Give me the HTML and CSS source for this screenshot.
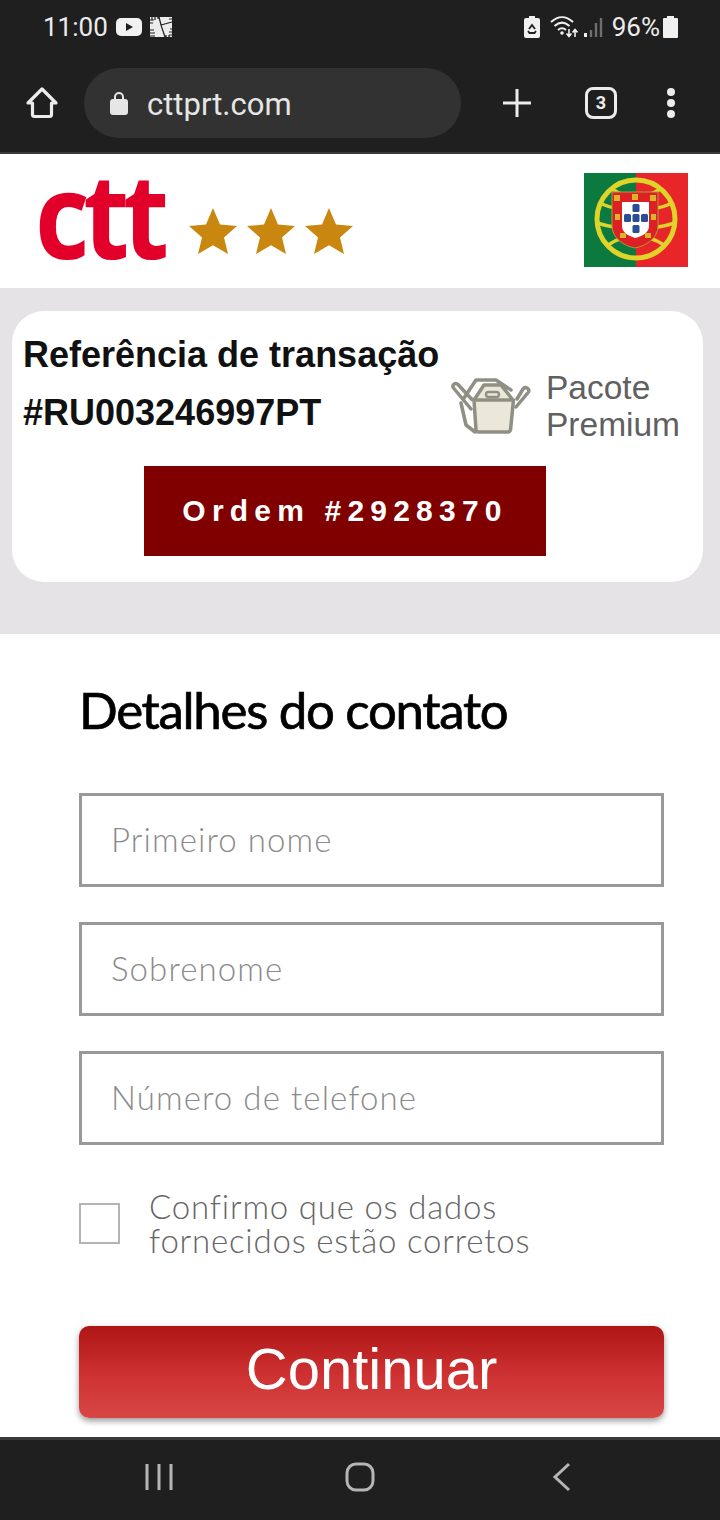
FILE: index.html
```html
<!DOCTYPE html>
<html lang="pt">
<head>
  <meta charset="UTF-8" />
  <meta name="viewport" content="width=device-width, initial-scale=1.0" />
  <title>Detalhes do contato</title>
  <link rel="stylesheet" href="styles.css">
</head>
<body>
  <header class="chrome">
    <div class="status-bar">
      <div class="status-left">
        <span class="clock">11:00</span>
        <svg class="yt" width="26" height="18" viewBox="0 0 26 18"><rect width="26" height="18" rx="5" fill="#f1f1f1"/><path d="M10 5l7 4-7 4z" fill="#1f1f1f"/></svg>
        <svg class="pic" width="24" height="22" viewBox="0 0 24 22"><rect x="1" y="1" width="22" height="20" fill="#ececec"/><path d="M10 1l2 8 4 12M12 9l11-3M0 4h5M0 7h4M0 14h5M0 17h6M0 20h6M3 0v4M6 0v4M9 0v3M23 3h-3M24 13h-3M24 16h-4M24 19h-4M17 22v-3M20 22v-3" stroke="#1f1f1f" stroke-width="1.200" fill="none"/></svg>
      </div>
      <div class="status-right">
        <svg width="16" height="22" viewBox="0 0 16 22"><path d="M5 0h6v2h3a2 2 0 0 1 2 2v16a2 2 0 0 1-2 2H2a2 2 0 0 1-2-2V4a2 2 0 0 1 2-2h3z" fill="#f1f1f1"/><path d="M5 13l3-4 3 4M4 15l1.500 2h5l1.500-2" stroke="#1f1f1f" stroke-width="1.800" fill="none"/></svg>
        <svg class="wifi" width="28" height="22" viewBox="0 0 28 22"><path d="M1 6c7-6.500 15-6.500 22 0M4.500 10c5-4.500 10-4.500 15 0M8 14c3-2.500 5-2.500 8 0" stroke="#f1f1f1" stroke-width="2" fill="none"/><circle cx="12" cy="17" r="1.800" fill="#f1f1f1"/><path d="M19 13v7M16.500 17.500l2.500 3 2.500-3M25 21v-7M22.500 16.500l2.500-3 2.500 3" stroke="#f1f1f1" stroke-width="1.600" fill="none"/></svg>
        <svg class="signal" width="19" height="20" viewBox="0 0 19 20"><path d="M1.500 20v-4" stroke="#eee" stroke-width="3"/><path d="M7 20v-7M12 20V6M17 20V1" stroke="#6f6f6f" stroke-width="2.400"/></svg>
        <span class="battery-pct">96%</span>
        <svg width="15" height="22" viewBox="0 0 15 22"><path d="M4 0h7v2h3a1 1 0 0 1 1 1v18a1 1 0 0 1-1 1H1a1 1 0 0 1-1-1V3a1 1 0 0 1 1-1h3z" fill="#f1f1f1"/></svg>
      </div>
    </div>
    <div class="toolbar">
      <svg class="home" width="34" height="34" viewBox="0 0 34 34"><path d="M3 17L17 3l14 14h-4.500v11.500a2 2 0 0 1-2 2h-15a2 2 0 0 1-2-2V17z" fill="none" stroke="#ececec" stroke-width="3.200" stroke-linejoin="round"/></svg>
      <div class="address">
        <svg width="18" height="24" viewBox="0 0 18 24"><path d="M5 9V6a4 4 0 0 1 8 0v3" fill="none" stroke="#e6e6e6" stroke-width="2"/><rect y="8" width="18" height="16" rx="3" fill="#e6e6e6"/></svg>
        <span class="url">cttprt.com</span>
      </div>
      <svg class="plus" width="30" height="30" viewBox="0 0 30 30"><path d="M15 1v28M1 15h28" stroke="#ececec" stroke-width="3"/></svg>
      <div class="tabs">3</div>
      <div class="dots"><i></i><i></i><i></i></div>
    </div>
  </header>

  <main class="page">
    <section class="brand">
      <div class="brand-left">
        <span class="logo">ctt</span>
        <div class="stars">
          <svg width="48" height="46" viewBox="0 0 48 46"><path d="M24 0l7 16.500 17 1.500-13 11.500 4 16.500-15-8.800-15 8.800 4-16.500L0 18l17-1.500z" fill="#c9870f"/></svg>
          <svg width="48" height="46" viewBox="0 0 48 46"><path d="M24 0l7 16.500 17 1.500-13 11.500 4 16.500-15-8.800-15 8.800 4-16.500L0 18l17-1.500z" fill="#c9870f"/></svg>
          <svg width="48" height="46" viewBox="0 0 48 46"><path d="M24 0l7 16.500 17 1.500-13 11.500 4 16.500-15-8.800-15 8.800 4-16.500L0 18l17-1.500z" fill="#c9870f"/></svg>
        </div>
      </div>
      <svg class="flag" width="104" height="94" viewBox="0 0 104 94">
        <rect width="52" height="94" fill="#0c7a3e"/>
        <rect x="52" width="52" height="94" fill="#e8262a"/>
        <circle cx="52" cy="46" r="39" fill="none" stroke="#dfd42a" stroke-width="5"/>
        <path d="M15 30c24 10 50 10 74 0M13 50c26 8 52 8 78 0M24 72c18-12 38-12 56 0M28 16c14 10 34 10 48 0" fill="none" stroke="#dfd42a" stroke-width="3.500"/>
        <path d="M28 19h46v34c0 12-12 20-23 22-11-2-23-10-23-22z" fill="#dd2024" stroke="#a99a3a" stroke-width="1"/>
        <path d="M38 29h27v24c0 7-7 10-13.500 12C45 63 38 60 38 53z" fill="#fff"/>
        <g fill="#2b4d95">
          <rect x="48.500" y="31" width="7" height="8" rx="1.500"/>
          <rect x="48.500" y="41" width="7" height="8" rx="1.500"/>
          <rect x="48.500" y="52" width="7" height="8" rx="1.500"/>
          <rect x="40" y="41" width="7" height="8" rx="1.500"/>
          <rect x="57" y="41" width="7" height="8" rx="1.500"/>
        </g>
        <g fill="#dcb32a">
          <rect x="30" y="22" width="6" height="6"/>
          <rect x="48" y="21" width="6" height="6"/>
          <rect x="66" y="22" width="6" height="6"/>
          <rect x="31" y="41" width="5" height="6"/>
          <rect x="67" y="41" width="5" height="6"/>
          <rect x="36" y="60" width="6" height="5"/>
          <rect x="61" y="60" width="6" height="5"/>
        </g>
      </svg>
    </section>

    <section class="band">
      <div class="card">
        <div class="card-top">
          <div class="reference">
            <div>Referência de transação</div>
            <div>#RU003246997PT</div>
          </div>
          <div class="package">
            <svg width="80" height="60" viewBox="0 0 80 60">
              <path d="M23 24h40l-4 30c-.3 1.500-1 2-2.500 2h-30c-1.500 0-2.500-.5-3-2z" fill="#ebe8d9"/>
              <path d="M33 9h17l12 15H23z" fill="#ebe8d9"/>
              <path d="M13 22l12-18h20l15 10M23 24l10-15h17l12 15zM23 24l2 30c.3 1.500 1 2 2.500 2h29c1.500 0 2.500-.5 3-2l3-30" fill="none" stroke="#8f8f83" stroke-width="3.500" stroke-linejoin="round" stroke-linecap="round"/>
              <path d="M20 33L2.500 12c-2-3 2-6 4.500-3.500l14 15M66 23l6-10c2-3 7-.5 5.500 3L65 31M10 27l5 22 9 7" fill="none" stroke="#8f8f83" stroke-width="3.500" stroke-linejoin="round" stroke-linecap="round"/>
              <rect x="35" y="16" width="13" height="5" rx="2.500" fill="none" stroke="#8f8f83" stroke-width="2.400"/>
            </svg>
            <div class="package-label">Pacote<br>Premium</div>
          </div>
        </div>
        <div class="order">Ordem #2928370</div>
      </div>
    </section>

    <form class="contact">
      <h2>Detalhes do contato</h2>
      <div class="field">Primeiro nome</div>
      <div class="field">Sobrenome</div>
      <div class="field">Número de telefone</div>
      <label class="confirm">
        <span class="box"></span>
        <span>Confirmo que os dados<br>fornecidos estão corretos</span>
      </label>
      <div class="continue">Continuar</div>
    </form>
  </main>

  <nav class="nav-bar">
    <svg width="30" height="30" viewBox="0 0 30 30"><path d="M3 2v26M15 2v26M27 2v26" stroke="#b5b5b5" stroke-width="3"/></svg>
    <svg width="30" height="30" viewBox="0 0 30 30"><rect x="2" y="2" width="26" height="26" rx="9" fill="none" stroke="#b5b5b5" stroke-width="3"/></svg>
    <svg width="26" height="30" viewBox="0 0 26 30"><path d="M23 2L9 15l14 13" fill="none" stroke="#b5b5b5" stroke-width="3"/></svg>
  </nav>
</body>
</html>
```

FILE: styles.css
```css
:root {
  --chrome: #1f1f1f;
  --chrome-light: #323232;
  --chrome-text: #ececec;
  --band: #e5e3e5;
  --field-border: #999;
  --placeholder: #8b8b8b;
}

* {
  box-sizing: border-box;
}

html,
body {
  margin: 0;
  height: 1520px;
  overflow: hidden;
}

body {
  display: flex;
  flex-direction: column;
  background-color: #fff;
  font-family: 'Liberation Sans', sans-serif;
}

/* phone + browser chrome */

.chrome {
  height: 154px;
  background-color: var(--chrome);
  border-bottom: 2px solid #3a3a3a;
  color: var(--chrome-text);
  font-family: Roboto, sans-serif;
}

.status-bar {
  height: 54px;
  padding: 0 42px 0 43px;
  display: flex;
  justify-content: space-between;
  align-items: center;
}

.status-left,
.status-right {
  display: flex;
  align-items: center;
}

.clock {
  font-size: 26px;
  margin-right: 8px;
}

.pic {
  margin-left: 7px;
}

.status-right .wifi {
  margin-left: 10px;
}

.status-right .signal {
  margin-left: 6px;
}

.battery-pct {
  font-size: 26px;
  margin: 0 3px 0 9px;
}

.toolbar {
  height: 98px;
  padding: 0 40px 0 25px;
  display: flex;
  align-items: center;
}

.address {
  width: 377px;
  height: 70px;
  margin-left: 25px;
  padding-left: 26px;
  border-radius: 35px;
  background-color: var(--chrome-light);
  display: flex;
  align-items: center;
  gap: 19px;
}

.url {
  margin-top: 2px;
  font-size: 31px;
  color: #e6e6e6;
}

.plus {
  margin-left: 41px;
}

.tabs {
  width: 32px;
  height: 32px;
  margin-left: 53px;
  border: 3px solid var(--chrome-text);
  border-radius: 8px;
  font-size: 18px;
  font-weight: 700;
  line-height: 26px;
  text-align: center;
}

.dots {
  margin-left: 50px;
  display: flex;
  flex-direction: column;
  gap: 3px;
}

.dots i {
  width: 8px;
  height: 8px;
  border-radius: 50%;
  background-color: var(--chrome-text);
}

/* page */

.page {
  flex: 1;
  min-height: 0;
}

.brand {
  height: 134px;
  padding: 0 32px 0 35px;
  display: flex;
  justify-content: space-between;
  align-items: center;
}

.brand-left {
  display: flex;
  align-items: flex-end;
}

.logo {
  width: 130px;
  height: 107px;
  font-family: 'Open Sans', sans-serif;
  font-size: 118px;
  font-weight: 700;
  letter-spacing: -7px;
  line-height: 91px;
  color: #e2002a;
  transform: scaleX(.9);
  transform-origin: left;
}

.stars {
  margin: 0 0 21px 24px;
  display: flex;
  gap: 10px;
}

.flag {
  margin-top: -2px;
}

.band {
  height: 346px;
  padding: 23px 17px 0 12px;
  background-color: var(--band);
}

.card {
  height: 271px;
  background-color: #fff;
  border-radius: 32px;
}

.card-top {
  height: 155px;
  padding: 15px 0 0 11px;
  display: flex;
}

.reference {
  width: 428px;
  font-size: 36px;
  font-weight: 700;
  line-height: 58px;
  color: #111;
}

.package {
  display: flex;
  align-items: center;
  height: 106px;
  margin-top: 27px;
  gap: 15px;
}

.package-label {
  font-size: 33.500px;
  line-height: 37px;
  color: #606060;
}

.order {
  width: 402px;
  height: 90px;
  margin-left: 132px;
  background-color: #800000;
  color: #fff;
  font-size: 30px;
  font-weight: 700;
  letter-spacing: 6.200px;
  line-height: 90px;
  text-align: center;
}

.contact {
  padding: 0 56px 0 79px;
}

h2 {
  margin: 46px 0 0;
  height: 113px;
  font-family: Lato, sans-serif;
  font-size: 51px;
  font-weight: 400;
  -webkit-text-stroke: .7px #000;
  line-height: 60px;
  letter-spacing: -1.300px;
  color: #000;
}

.field {
  height: 94px;
  margin-bottom: 35px;
  padding-left: 29px;
  border: 3px solid var(--field-border);
  font-family: Lato, sans-serif;
  font-size: 33px;
  font-weight: 300;
  letter-spacing: 1.100px;
  line-height: 87px;
  color: var(--placeholder);
}

.confirm {
  display: flex;
  align-items: center;
  gap: 29px;
  margin-top: 44px;
  font-family: Lato, sans-serif;
  font-size: 33px;
  font-weight: 300;
  letter-spacing: .8px;
  line-height: 34px;
  color: #666;
}

.box {
  width: 41px;
  height: 41px;
  border: 2px solid #b4b4b4;
}

.continue {
  height: 92px;
  margin-top: 69px;
  border-radius: 10px;
  background: linear-gradient(#ae1616, #cf3232 55%, #d84646);
  box-shadow: 0 3px 6px rgba(0, 0, 0, 0.4);
  color: #fff;
  font-size: 58px;
  line-height: 86px;
  text-align: center;
}

.nav-bar {
  height: 83px;
  border-top: 3px solid #3a3a3a;
  background-color: var(--chrome);
  padding: 0 148px 6px 144px;
  display: flex;
  justify-content: space-between;
  align-items: center;
}
```
